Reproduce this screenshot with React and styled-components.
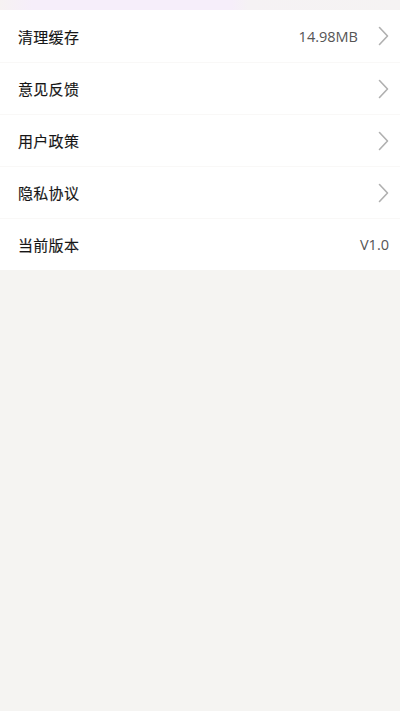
import React from "react";
import styled, { createGlobalStyle } from "styled-components";

const Global = createGlobalStyle`
  html, body { margin: 0; padding: 0; background: #f5f4f2; }
  body { font-family: "Noto Sans CJK SC", "Noto Sans", sans-serif; }
`;

const Page = styled.div`
  min-height: 711px;
  background: #f5f4f2;
  display: flex;
  flex-direction: column;
`;

const TopStrip = styled.div`
  height: 10px;
  background: linear-gradient(90deg, #f6f2f2 0%, #f6eefa 8%, #f6eefa 58%, #f5f2f4 62%, #f5f3f3 100%);
`;

const Card = styled.div`
  background: #ffffff;
  display: flex;
  flex-direction: column;
`;

const Row = styled.div`
  height: 52px;
  display: flex;
  align-items: center;
  padding: 0 11px 0 18px;
  border-top: ${(p) => (p.$first ? "none" : "1px solid #f9f8f7")};
  box-sizing: border-box;
`;

const Label = styled.span`
  flex: 1;
  font-size: 15px;
  color: #161616;
  letter-spacing: 0.3px;
  -webkit-text-stroke: 0.15px #161616;
`;

const Value = styled.span`
  font-family: "Open Sans", "Noto Sans", sans-serif;
  font-size: 14.5px;
  color: #555555;
  margin-right: ${(p) => (p.$arrow ? "20px" : "0")};
`;

const Arrow = () => (
  <svg width="11" height="20" viewBox="0 0 11 20" fill="none">
    <path d="M1.5 1.5 L9.5 10 L1.5 18.5" stroke="#b0b0b0" strokeWidth="1.6" strokeLinecap="round" strokeLinejoin="round" />
  </svg>
);

const items = [
  { label: "清理缓存", value: "14.98MB", arrow: true },
  { label: "意见反馈", arrow: true },
  { label: "用户政策", arrow: true },
  { label: "隐私协议", arrow: true },
  { label: "当前版本", value: "V1.0", arrow: false },
];

export default function App() {
  return (
    <Page>
      <Global />
      <TopStrip />
      <Card>
        {items.map((it, i) => (
          <Row key={it.label} $first={i === 0}>
            <Label>{it.label}</Label>
            {it.value && <Value $arrow={it.arrow}>{it.value}</Value>}
            {it.arrow && <Arrow />}
          </Row>
        ))}
      </Card>
    </Page>
  );
}
